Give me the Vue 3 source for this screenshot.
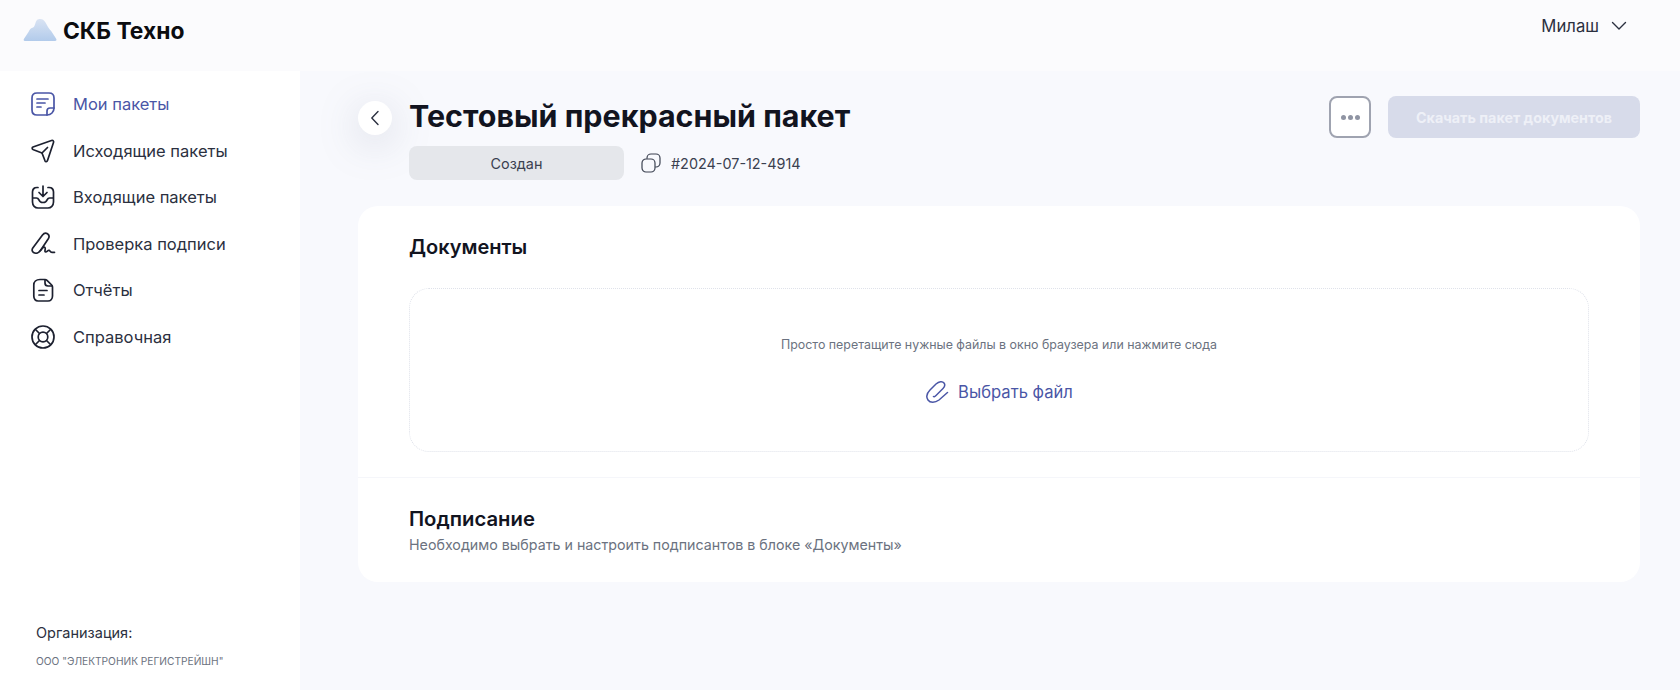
<script setup>
const navItems = [
  { id: 'my', text: 'Мои пакеты', active: true },
  { id: 'out', text: 'Исходящие пакеты' },
  { id: 'in', text: 'Входящие пакеты' },
  { id: 'sign', text: 'Проверка подписи' },
  { id: 'rep', text: 'Отчёты' },
  { id: 'help', text: 'Справочная' }
]
</script>

<template>
  <div class="page">
    <header class="header">
      <div class="logo">
        <svg width="34" height="24" viewBox="0 0 34 24">
          <defs>
            <linearGradient id="cloud" x1="0" y1="0" x2="0" y2="1">
              <stop offset="0" stop-color="#d9e3f3" />
              <stop offset="1" stop-color="#b2cbeb" />
            </linearGradient>
          </defs>
          <path d="M2 23 C0.500 23 0.300 21.500 1.200 20.500 L5.500 14 C6.500 12 7.500 10 9.500 9.800 C11 9.500 11.500 8 12.500 5 C13.500 1.500 15 1 17 1 C19.500 1 21 2 22.500 4.500 L25 9 C26 11 27.500 12 28.500 13.500 L33 20.500 C34 22 33.500 23 32 23 Z" fill="url(#cloud)" />
        </svg>
        <span class="logo__text">СКБ Техно</span>
      </div>
      <div class="user">
        <span>Милаш</span>
        <svg width="16" height="10" viewBox="0 0 16 10" fill="none" stroke="#2b3040" stroke-width="1.400" stroke-linecap="round" stroke-linejoin="round">
          <path d="M1.500 1.500 L8 8 L14.500 1.500" />
        </svg>
      </div>
    </header>

    <div class="body">
      <aside class="sidebar">
        <nav class="nav">
          <a v-for="item in navItems" :key="item.id" class="nav__item" :class="{ active: item.active }">
            <svg class="nav__icon" width="26" height="26" viewBox="0 0 26 26" fill="none" stroke="currentColor" stroke-width="1.700" stroke-linecap="round" stroke-linejoin="round">
              <template v-if="item.id === 'my'">
                <path d="M17 24 H7 C4 24 2 22 2 19 V7 C2 4 4 2 7 2 H19 C22 2 24 4 24 7 V17 C24 21 21 24 17 24 Z" />
                <path d="M17 24 V20 C17 18.500 18 17 20 17 H24" />
                <path d="M7 8 H18 M7 12 H15 M7 16 H11" />
              </template>
              <template v-else-if="item.id === 'out'">
                <path d="M3 9 L21.500 2.500 C23 2 24 3 23.500 4.500 L17.500 22.500 C17 24 15.500 24 15 22.800 L12 15 L3.500 11.800 C1.800 11 1.800 9.500 3 9 Z" />
                <path d="M12 15 L17.500 9.500" />
              </template>
              <template v-else-if="item.id === 'in'">
                <path d="M8 3.500 H7 C4 3.500 2.500 5.500 2.500 8 V18 C2.500 21.500 5 24 8 24 H18 C21 24 23.500 21.500 23.500 18 V8 C23.500 5.500 22 3.500 19 3.500 H18" />
                <path d="M13 2 V12 M9 8.500 L13 12.500 L17 8.500" />
                <path d="M3 14 H6.500 C8 14 8.500 15 9 16 C9.500 17.500 11 18.500 13 18.500 C15 18.500 16.500 17.500 17 16 C17.500 15 18 14 19.500 14 H23" />
              </template>
              <template v-else-if="item.id === 'sign'">
                <path d="M3.500 21.500 C1.800 20.500 1.800 18.500 2.800 17 L12.500 4 C14 2 16 1.800 17.500 2.800 C19 3.800 19.500 5.800 18.300 7.800 L10.800 19 C9 21.800 6 23 3.500 21.500 Z" />
                <path d="M10.500 19.500 C12.500 17 14 15.500 15 16.500 C16 17.500 14 20.800 15.500 21 C17 21.200 17.800 19 19 19.300 C20 19.600 20 21.300 22 21.300 H24.500" />
              </template>
              <template v-else-if="item.id === 'rep'">
                <path d="M10 2.500 H15 C15.800 2.500 16.500 2.800 17 3.300 L21.700 8 C22.200 8.500 22.500 9.200 22.500 10 V19 C22.500 22 20.500 24 18 24 H8 C5.500 24 3.800 22 3.800 19 V8 C3.800 5 6 2.500 10 2.500 Z" />
                <path d="M15 3 V6 C15 8 16 9 18 9 H22" />
                <path d="M9 13.500 H17 M9 18 H14" />
              </template>
              <template v-else>
                <circle cx="13" cy="13" r="11" />
                <circle cx="13" cy="13" r="4.800" />
                <path d="M5.500 5.500 L9.500 9.500 M20.500 5.500 L16.500 9.500 M5.500 20.500 L9.500 16.500 M20.500 20.500 L16.500 16.500" />
              </template>
            </svg>
            <span>{{ item.text }}</span>
          </a>
        </nav>
        <div class="org">
          <div class="org__label">Организация:</div>
          <div class="org__name">ООО "ЭЛЕКТРОНИК РЕГИСТРЕЙШН"</div>
        </div>
      </aside>

      <main class="main">
        <div class="top">
          <button class="back">
            <svg width="10" height="16" viewBox="0 0 10 16" fill="none" stroke="#2b3040" stroke-width="1.400" stroke-linecap="round" stroke-linejoin="round">
              <path d="M8 1.500 L1.800 8 L8 14.500" />
            </svg>
          </button>
          <div class="top__info">
            <h1>Тестовый прекрасный пакет</h1>
            <div class="meta">
              <span class="status">Создан</span>
              <svg width="20" height="20" viewBox="0 0 20 20" fill="none" stroke="#3b4150" stroke-width="1.200">
                <rect x="1" y="6" width="13" height="13" rx="4" />
                <path d="M6 5.800 V5 C6 2.800 7.800 1 10 1 H15 C17.200 1 19 2.800 19 5 V10 C19 12.200 17.200 14 15 14 H14.200" />
              </svg>
              <span class="number">#2024-07-12-4914</span>
            </div>
          </div>
          <div class="actions">
            <button class="more"><i></i><i></i><i></i></button>
            <button class="download">Скачать пакет документов</button>
          </div>
        </div>

        <section class="card">
          <div class="docs">
            <h2>Документы</h2>
            <div class="drop">
              <p>Просто перетащите нужные файлы в окно браузера или нажмите сюда</p>
              <a class="pick">
                <svg width="24" height="24" viewBox="0 0 24 24" fill="none" stroke="#4a56a6" stroke-width="1.500" stroke-linecap="round">
                  <path d="M22.500 12.500 L14 20 C10 23 5 23 3 20 C1 17 2 13 5 10 L11 4 C14 1.500 17.500 1 19 3 C20.500 5 19.500 7 18 8.500 L11 15.500 C10 16.500 9 17 8.500 16.500" />
                </svg>
                <span>Выбрать файл</span>
              </a>
            </div>
          </div>
          <div class="signing">
            <h2>Подписание</h2>
            <p>Необходимо выбрать и настроить подписантов в блоке «Документы»</p>
          </div>
        </section>
      </main>
    </div>
  </div>
</template>

<style>
html, body {
  margin: 0;
  padding: 0;
}
</style>

<style scoped>
.page {
  width: 1680px;
  height: 690px;
  overflow: hidden;
  font-family: Inter, "Noto Sans", sans-serif;
  color: #2b3040;
  display: flex;
  flex-direction: column;
  background: #f8f9fd;
}
.header {
  height: 71px;
  flex: none;
  background: #fbfbfd;
  display: flex;
  justify-content: space-between;
  box-sizing: border-box;
  padding: 0 53px 0 23px;
}
.logo {
  display: flex;
  align-items: center;
  gap: 6px;
  height: 60px;
}
.logo__text {
  font-size: 22.800px;
  font-weight: 700;
  color: #0b0c10;
}
.user {
  display: flex;
  align-items: center;
  gap: 12px;
  height: 52px;
  font-size: 16.700px;
}
.body {
  flex: 1;
  display: flex;
  min-height: 0;
}
.sidebar {
  width: 300px;
  flex: none;
  background: #fff;
  display: flex;
  flex-direction: column;
  justify-content: space-between;
  box-sizing: border-box;
  padding: 10px 0 21px 30px;
}
.nav {
  display: flex;
  flex-direction: column;
}
.nav__item {
  height: 46.500px;
  display: flex;
  align-items: center;
  gap: 17px;
  font-size: 16.500px;
  color: #2b3040;
}
.nav__icon {
  flex: none;
  color: #1d2130;
}
.nav__item.active,
.nav__item.active .nav__icon {
  color: #4a56a6;
}
.org {
  padding-left: 6px;
}
.org__label {
  font-size: 14.500px;
  line-height: 20px;
  color: #2b3040;
}
.org__name {
  margin-top: 10px;
  font-size: 10.200px;
  line-height: 16px;
  color: #6b7280;
}
.main {
  flex: 1;
  box-sizing: border-box;
  padding: 25px 40px 0 58px;
}
.top {
  display: flex;
  align-items: flex-start;
}
.back {
  width: 34px;
  height: 34px;
  margin-top: 5px;
  padding: 0;
  border: 0;
  border-radius: 50%;
  background: #fff;
  box-shadow: 0 8px 40px rgba(120, 125, 150, 0.28);
  display: flex;
  align-items: center;
  justify-content: center;
}
.top__info {
  margin-left: 17px;
  flex: 1;
}
h1 {
  margin: -1px 0 0;
  font-size: 30.450px;
  line-height: 42px;
  font-weight: 700;
  color: #12141f;
}
.meta {
  display: flex;
  align-items: center;
  margin-top: 9px;
}
.status {
  width: 215px;
  height: 34px;
  border-radius: 8px;
  background: #e5e7eb;
  font-size: 14.400px;
  color: #3b4150;
  display: flex;
  align-items: center;
  justify-content: center;
  margin-right: 17px;
}
.number {
  margin-left: 10px;
  font-size: 14.400px;
  color: #3b4150;
}
.actions {
  display: flex;
  gap: 17px;
}
.more {
  width: 42px;
  height: 42px;
  box-sizing: border-box;
  border: 2px solid #9fa3b0;
  border-radius: 8px;
  background: #fff;
  padding: 0;
  display: flex;
  align-items: center;
  justify-content: center;
  gap: 2px;
}
.more i {
  width: 5px;
  height: 5px;
  border-radius: 50%;
  background: #8f94a3;
}
.download {
  width: 252px;
  height: 42px;
  border: 0;
  border-radius: 8px;
  background: #d7dbea;
  color: #eef0f7;
  font-family: inherit;
  font-size: 14.300px;
  font-weight: 700;
  padding: 0;
}
.card {
  margin-top: 26px;
  background: #fff;
  border-radius: 20px;
  height: 376px;
  display: flex;
  flex-direction: column;
}
.docs {
  box-sizing: border-box;
  height: 272px;
  padding: 26px 51px 0;
  border-bottom: 1px solid #f5f6fa;
}
h2 {
  margin: 0;
  font-size: 20px;
  line-height: 30px;
  font-weight: 600;
  color: #12141f;
}
.drop {
  margin-top: 26px;
  height: 164px;
  box-sizing: border-box;
  border: 1px dotted #dfe2ea;
  border-radius: 20px;
  display: flex;
  flex-direction: column;
  align-items: center;
  padding-top: 47px;
}
.drop p {
  margin: 0;
  font-size: 12.400px;
  line-height: 18px;
  color: #6b7280;
}
.pick {
  margin-top: 26px;
  display: flex;
  align-items: center;
  gap: 9px;
  font-size: 16.600px;
  color: #4a56a6;
}
.signing {
  padding: 26px 51px 0;
}
.signing h2 {
  font-size: 20.300px;
}
.signing p {
  margin: 0;
  font-size: 14.250px;
  line-height: 22px;
  color: #6b7280;
}
</style>
